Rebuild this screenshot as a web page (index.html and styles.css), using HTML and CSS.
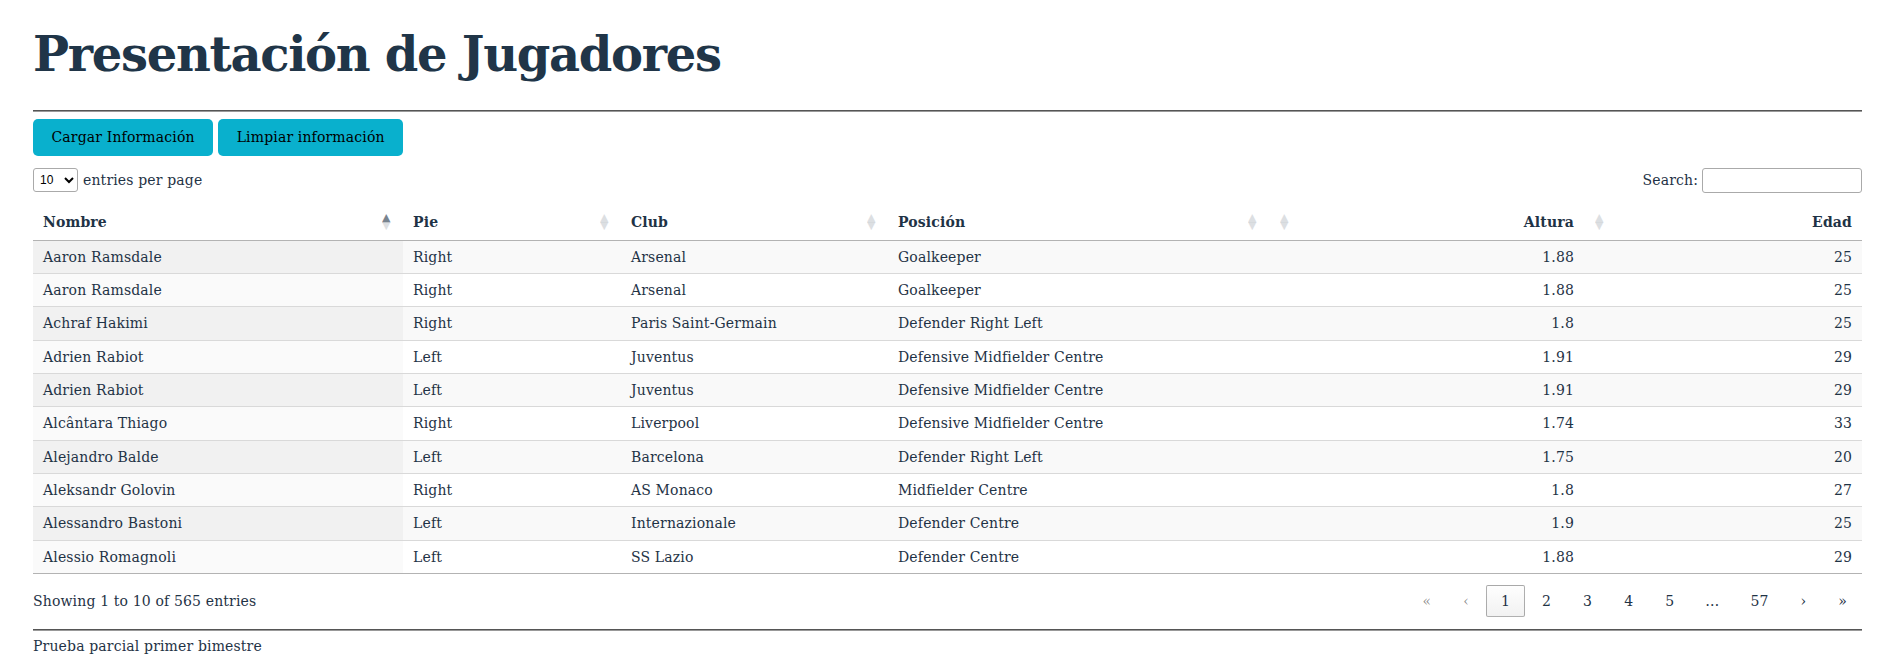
FILE: index.html
```html
<!DOCTYPE html>
<html lang="es">
<head>
<meta charset="utf-8">
<title>Presentación de Jugadores</title>
<link rel="stylesheet" href="styles.css">
</head>
<body>
<div class="page">
  <h1 class="title">Presentación de Jugadores</h1>
  <hr class="rule">
  <div class="actions">
    <button class="btn">Cargar Información</button>
    <button class="btn">Limpiar información</button>
  </div>

  <div class="dt">
    <div class="dt-top">
      <div class="length">
        <select class="length-select"><option>10</option><option>25</option><option>50</option></select>
        <span>entries per page</span>
      </div>
      <div class="search">
        <label class="search-label">Search:</label>
        <input class="search-input" type="search">
      </div>
    </div>

    <table class="grid">
      <colgroup>
        <col class="c1"><col class="c2"><col class="c3"><col class="c4"><col class="c5"><col class="c6">
      </colgroup>
      <thead>
        <tr>
          <th><div class="hd"><span>Nombre</span><span class="order asc"></span></div></th>
          <th><div class="hd"><span>Pie</span><span class="order"></span></div></th>
          <th><div class="hd"><span>Club</span><span class="order"></span></div></th>
          <th><div class="hd"><span>Posición</span><span class="order"></span></div></th>
          <th><div class="hd num"><span>Altura</span><span class="order"></span></div></th>
          <th><div class="hd num"><span>Edad</span><span class="order"></span></div></th>
        </tr>
      </thead>
      <tbody>
        <tr><td>Aaron Ramsdale</td><td>Right</td><td>Arsenal</td><td>Goalkeeper</td><td class="n">1.88</td><td class="n">25</td></tr>
        <tr><td>Aaron Ramsdale</td><td>Right</td><td>Arsenal</td><td>Goalkeeper</td><td class="n">1.88</td><td class="n">25</td></tr>
        <tr><td>Achraf Hakimi</td><td>Right</td><td>Paris Saint-Germain</td><td>Defender Right Left</td><td class="n">1.8</td><td class="n">25</td></tr>
        <tr><td>Adrien Rabiot</td><td>Left</td><td>Juventus</td><td>Defensive Midfielder Centre</td><td class="n">1.91</td><td class="n">29</td></tr>
        <tr><td>Adrien Rabiot</td><td>Left</td><td>Juventus</td><td>Defensive Midfielder Centre</td><td class="n">1.91</td><td class="n">29</td></tr>
        <tr><td>Alcântara Thiago</td><td>Right</td><td>Liverpool</td><td>Defensive Midfielder Centre</td><td class="n">1.74</td><td class="n">33</td></tr>
        <tr><td>Alejandro Balde</td><td>Left</td><td>Barcelona</td><td>Defender Right Left</td><td class="n">1.75</td><td class="n">20</td></tr>
        <tr><td>Aleksandr Golovin</td><td>Right</td><td>AS Monaco</td><td>Midfielder Centre</td><td class="n">1.8</td><td class="n">27</td></tr>
        <tr><td>Alessandro Bastoni</td><td>Left</td><td>Internazionale</td><td>Defender Centre</td><td class="n">1.9</td><td class="n">25</td></tr>
        <tr><td>Alessio Romagnoli</td><td>Left</td><td>SS Lazio</td><td>Defender Centre</td><td class="n">1.88</td><td class="n">29</td></tr>
      </tbody>
    </table>

    <div class="dt-bottom">
      <div class="info">Showing 1 to 10 of 565 entries</div>
      <nav class="pager">
        <span class="pg disabled">«</span>
        <span class="pg disabled">‹</span>
        <span class="pg current">1</span>
        <span class="pg">2</span>
        <span class="pg">3</span>
        <span class="pg">4</span>
        <span class="pg">5</span>
        <span class="ellipsis">…</span>
        <span class="pg">57</span>
        <span class="pg">›</span>
        <span class="pg">»</span>
      </nav>
    </div>
  </div>

  <hr class="rule rule-bottom">
  <p class="foot">Prueba parcial primer bimestre</p>
</div>
</body>
</html>
```
FILE: styles.css
```css
* { box-sizing: border-box; }
html, body { margin: 0; background: #fff; }
body {
  font-family: "DejaVu Serif", serif;
  font-size: 14px;
  line-height: 16.33px;
  letter-spacing: 0.15px;
  color: #1f3346;
}
.page { padding: 26px 30px 0 33px; }

.title {
  margin: 0;
  font-size: 48px;
  line-height: 56px;
  font-weight: bold;
  letter-spacing: -1.3px;
  color: #203548;
}

.rule {
  margin: 28px 0 0;
  height: 0;
  border: 0;
  border-top: 1px solid #555;
  border-bottom: 1px solid #999;
}
.rule-bottom { margin-top: 12px; }

.actions { display: flex; gap: 5px; margin-top: 7px; }
.btn {
  font-family: "DejaVu Serif", serif;
  font-size: 14px;
  line-height: 17px;
  letter-spacing: 0.15px;
  color: #000;
  background: #09b0cd;
  border: 0;
  border-radius: 5px;
  padding: 10px 18.5px;
}

.dt-top {
  display: flex;
  justify-content: space-between;
  align-items: center;
  height: 26px;
  margin-top: 11px;
}
.length { display: flex; align-items: center; gap: 5px; }
.length-select {
  width: 45px;
  height: 24px;
  font-size: 12px;
  padding: 2px;
  border: 1px solid #aaa;
  border-radius: 3px;
  background: #fff;
  color: #000;
  letter-spacing: 0;
}
.search { display: flex; align-items: center; gap: 4px; }
.search-input {
  width: 160px;
  height: 25px;
  border: 1px solid #aaa;
  border-radius: 3px;
  padding: 4px;
  background: #fff;
}

.grid {
  width: 100%;
  table-layout: fixed;
  border-collapse: separate;
  border-spacing: 0;
  margin-top: 10.5px;
  border-bottom: 1px solid #b3b3b3;
}
.c1 { width: 370px; }
.c2 { width: 218px; }
.c3 { width: 267px; }
.c4 { width: 381px; }
.c5 { width: 315px; }

.grid th {
  padding: 10px;
  text-align: left;
  font-weight: bold;
  border-bottom: 1px solid #b3b3b3;
}
.hd {
  display: flex;
  justify-content: space-between;
  align-items: center;
  gap: 4px;
}
.hd.num { flex-direction: row-reverse; }
.order {
  position: relative;
  width: 12px;
  height: 16px;
  flex: none;
}
.order::before, .order::after {
  position: absolute;
  left: 1px;
  display: block;
  font-family: "DejaVu Sans", sans-serif;
  font-size: 11px;
  line-height: 8px;
  letter-spacing: 0;
  opacity: 0.15;
}
.order::before { content: "▲"; bottom: 50%; }
.order::after { content: "▼"; top: 50%; }
.order.asc::before { opacity: 0.6; }

.grid td {
  padding: 8px 10px;
  border-top: 1px solid #d9d9d9;
  white-space: nowrap;
}
.grid tbody tr:first-child td { border-top: 0; }
.grid tbody tr:nth-child(odd) td { background: #f9f9f9; }
.grid tbody tr:nth-child(odd) td:first-child { background: #f1f1f1; }
.grid tbody tr:nth-child(even) td:first-child { background: #fafafa; }
.grid td.n { text-align: right; }

.dt-bottom {
  display: flex;
  justify-content: space-between;
  align-items: center;
  margin-top: 10.5px;
}
.pager { display: flex; align-items: center; }
.pg {
  padding: 7px 14px;
  margin-left: 2px;
  min-width: 21px;
  text-align: center;
  border: 1px solid transparent;
  border-radius: 2px;
  color: #1f3346;
}
.pg.disabled { color: rgba(0, 0, 0, 0.45); }
.pg.current {
  border-color: rgba(0, 0, 0, 0.3);
  background: linear-gradient(to bottom, rgba(230, 230, 230, 0.05) 0%, rgba(0, 0, 0, 0.05) 100%);
}
.ellipsis { padding: 0 14px; margin-left: 2px; }

.foot { margin: 7px 0 0; }
```
